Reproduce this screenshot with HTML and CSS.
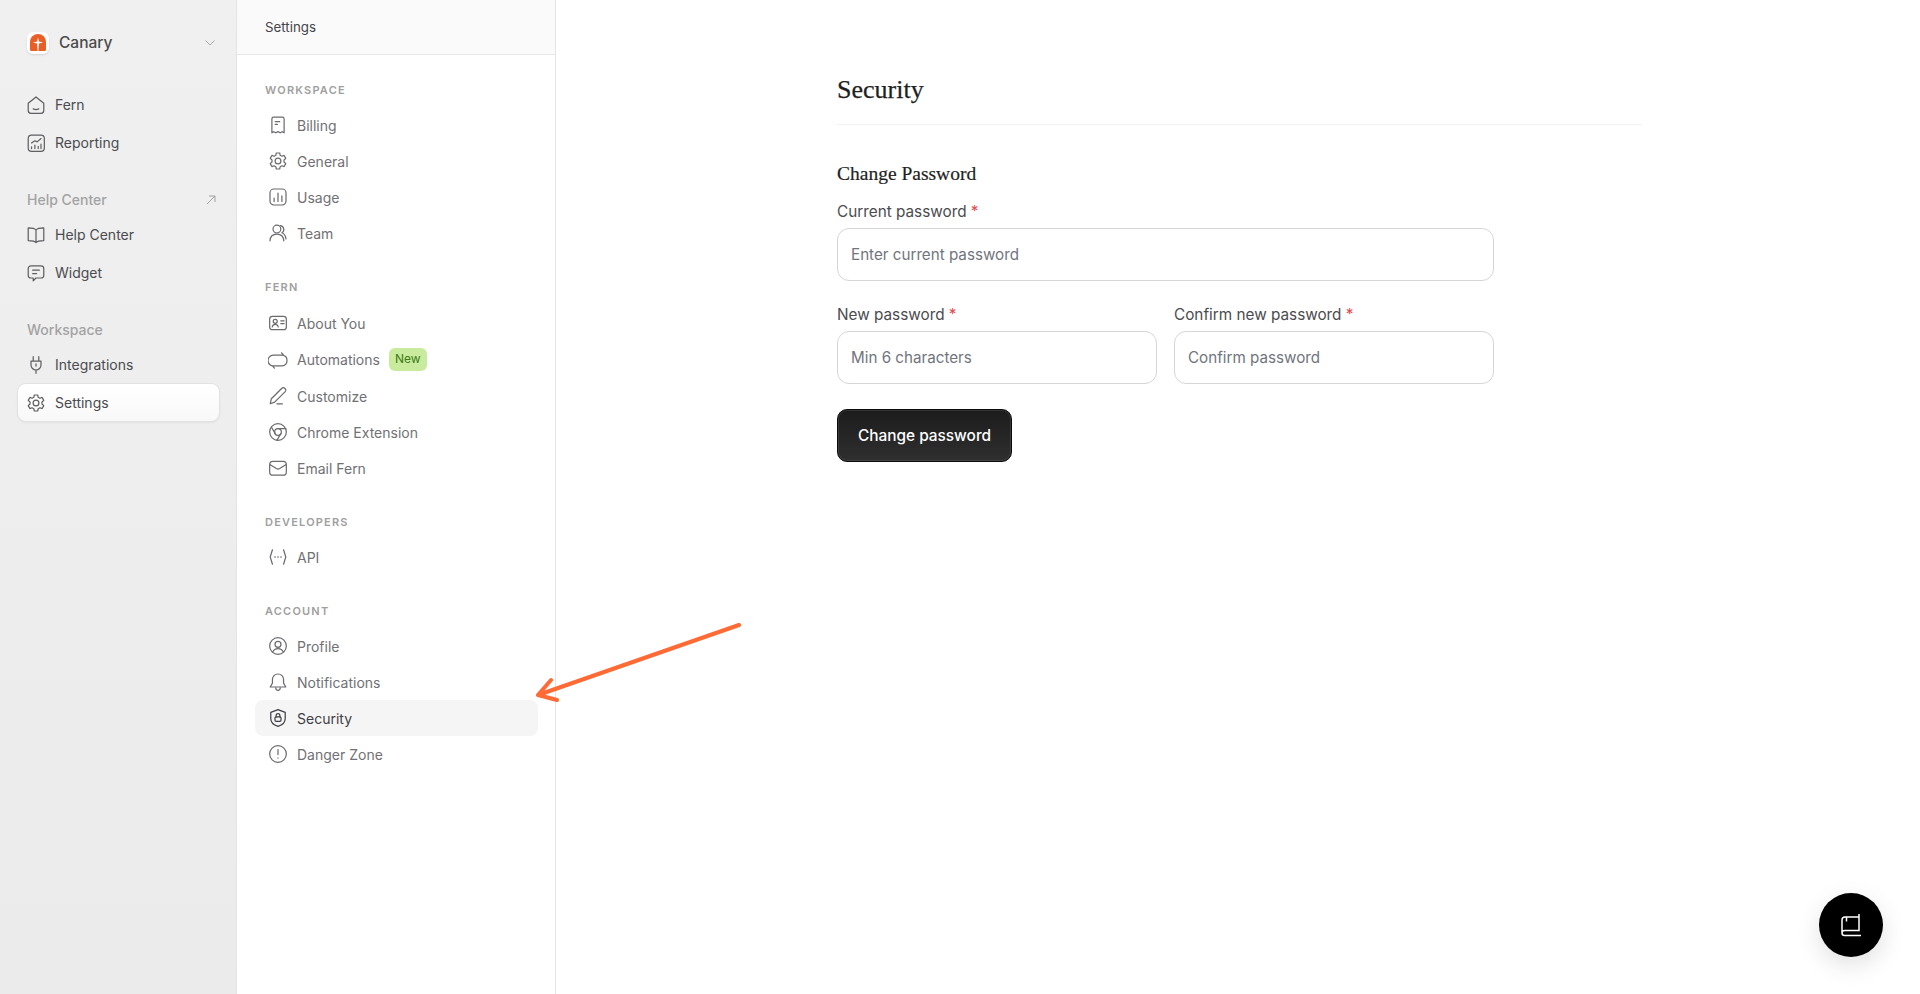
FILE: index.html
```html
<!DOCTYPE html>
<html lang="en">
<head>
<meta charset="utf-8">
<title>Security</title>
<link rel="stylesheet" href="styles.css">
</head>
<body>
<aside class="rail">
  <div class="brand">
    <span class="logo"><svg viewBox="0 0 18 18" width="18" height="18"><path d="M1 15.500V8a8 8 0 0 1 16 0v7.500a1.500 1.500 0 0 1-1.500 1.500h-13A1.500 1.500 0 0 1 1 15.500z" fill="#ea5f25"/><path d="M9 3.500 10 7.500l4 1-4 1-.6 7.500h-.8L8 9.500l-4-1 4-1z" fill="#fff"/></svg></span>
    <span class="brand-name">Canary</span>
    <svg class="chev" viewBox="0 0 12 12" width="12" height="12"><path d="M1.500 3.500 6 8l4.500-4.500" fill="none" stroke="#aaa" stroke-width="1"/></svg>
  </div>
  <nav class="rail-group">
    <a class="rail-item"><svg class="ic" viewBox="0 0 18 18"><path d="M2 7.500 9 1.800l7 5.700v6.500a2.500 2.500 0 0 1-2.500 2.500h-9A2.500 2.500 0 0 1 2 14z"/><path d="M6.500 12.500q2.500 1.200 5 0"/></svg>Fern</a>
    <a class="rail-item"><svg class="ic" viewBox="0 0 18 18"><rect x="2" y="2" width="14.500" height="14.500" rx="3"/><path d="M5 9l3-2 2 1 3.500-3M5 14v-1.500M8 14v-3M11 14v-2M13.500 14v-4"/></svg>Reporting</a>
  </nav>
  <div class="rail-head">Help Center<svg class="out" viewBox="0 0 10 10" width="10" height="10"><path d="M1 9 9 1M3 1h6v6" fill="none" stroke="#999" stroke-width=".9"/></svg></div>
  <nav class="rail-group">
    <a class="rail-item"><svg class="ic" viewBox="0 0 18 18"><path d="M9 4.500C8 3 6 2.500 2 2.500v11.500c4 0 6 .5 7 1.800 1-1.300 3-1.800 7-1.800V2.500c-4 0-6 .5-7 2zM9 4.500v11.300"/></svg>Help Center</a>
    <a class="rail-item"><svg class="ic" viewBox="0 0 18 18"><path d="M4.500 2.500h9a2.500 2.500 0 0 1 2.500 2.500v6a2.500 2.500 0 0 1-2.500 2.500H9l-2.500 2.500v-2.500h-2A2.500 2.500 0 0 1 2 11V5a2.500 2.500 0 0 1 2.500-2.500zM6 6.500h6M6 9.500h3.500"/></svg>Widget</a>
  </nav>
  <div class="rail-head gap">Workspace</div>
  <nav class="rail-group">
    <a class="rail-item"><svg class="ic" viewBox="0 0 18 18"><path d="M6.500 1.500v4M11.500 1.500v4M4.500 5.500h9v3.500a4.500 4.500 0 0 1-9 0zM9 13.500v3M9 8v2"/></svg>Integrations</a>
    <a class="rail-item active"><svg class="ic" viewBox="0 0 18 18"><use href="#gear"/></svg>Settings</a>
  </nav>
</aside>

<aside class="panel">
  <header class="panel-top">Settings</header>
  <div class="panel-body">
    <section class="sect">
      <h4 class="sect-title">Workspace</h4>
      <a class="link"><svg class="ic" viewBox="0 0 18 18"><path d="M3.500 3.500A1.500 1.500 0 0 1 5 2h8a1.500 1.500 0 0 1 1.500 1.500v12.500l-1.700-1-1.800 1-2-1-2 1-1.800-1-1.700 1zM6.500 6h4M6.500 8.500h2"/></svg>Billing</a>
      <a class="link"><svg class="ic" viewBox="0 0 18 18"><use href="#gear"/></svg>General</a>
      <a class="link"><svg class="ic" viewBox="0 0 18 18"><rect x="1.800" y="1.800" width="14.400" height="14.400" rx="3.500"/><path d="M5.500 13v-3M9 13V5.500M12.500 13V8"/></svg>Usage</a>
      <a class="link"><svg class="ic" viewBox="0 0 18 18"><circle cx="8" cy="5.500" r="3.500"/><path d="M1.800 16c.2-3.500 2.500-6 6.200-6s6 2.500 6.200 6M11 2.300a3.500 3.500 0 0 1 1.500 6.500c2 .8 3.400 3 3.700 5.500"/></svg>Team</a>
    </section>
    <section class="sect wide">
      <h4 class="sect-title">Fern</h4>
      <a class="link"><svg class="ic" viewBox="0 0 18 18"><rect x="1.500" y="3" width="15" height="12" rx="2.500"/><circle cx="6.500" cy="7.500" r="1.800"/><path d="M3.800 12.500c.3-1.500 1.300-2.300 2.700-2.300s2.400.8 2.700 2.300M11.500 7h3M11.500 9.500h3"/></svg>About You</a>
      <a class="link auto"><svg class="ic" viewBox="0 0 18 18"><path d="M5 14.300H5a4.800 4.800 0 0 1-.4-9.600h9M12.200 2.500l1.800 2.200M13 4.700a4.800 4.800 0 0 1 0 9.500H4.500M5.800 16.300 4 14.200"/></svg>Automations<span class="badge">New</span></a>
      <a class="link"><svg class="ic" viewBox="0 0 18 18"><path d="M2 16l1-4.500L12.500 2a1.800 1.800 0 0 1 2.500 0l.5.500a1.800 1.800 0 0 1 0 2.500L6 14.500zM8 16h5"/></svg>Customize</a>
      <a class="link"><svg class="ic" viewBox="0 0 18 18"><circle cx="9" cy="9" r="7.500"/><circle cx="9" cy="9" r="3"/><path d="M9 6h7M6.500 10.500 3 4.500M11.500 10.500 8 16.500"/></svg>Chrome Extension</a>
      <a class="link"><svg class="ic" viewBox="0 0 18 18"><rect x="1.500" y="3" width="15" height="12.500" rx="3"/><path d="M2 6l5.500 3.500a3 3 0 0 0 3 0L16 6"/></svg>Email Fern</a>
    </section>
    <section class="sect">
      <h4 class="sect-title">Developers</h4>
      <a class="link"><svg class="ic" viewBox="0 0 18 18"><path d="M4 2.500 2 9l2 6.500M14 2.500 16 9l-2 6.500"/><path class="dots" d="M6.300 9h.1M9 9h.1M11.700 9h.1"/></svg>API</a>
    </section>
    <section class="sect">
      <h4 class="sect-title">Account</h4>
      <a class="link"><svg class="ic" viewBox="0 0 18 18"><circle cx="9" cy="9" r="7.500"/><circle cx="9" cy="7.500" r="2.700"/><path d="M4.200 14.500c.8-2 2.500-3.200 4.800-3.200s4 1.200 4.800 3.200"/></svg>Profile</a>
      <a class="link"><svg class="ic" viewBox="0 0 18 18"><path d="M9 1.800c-3 0-5 2.200-5 5v3.200l-2 3.500h14l-2-3.500V6.800c0-2.800-2-5-5-5zM7 14.500a2 2 0 0 0 4 0"/></svg>Notifications</a>
      <a class="link current"><svg class="ic" viewBox="0 0 18 18"><path d="M9 1.500 15.500 4v5.500c0 3.500-2.700 6-6.500 7-3.800-1-6.500-3.500-6.500-7V4z"/><rect x="6.300" y="8" width="5.400" height="4" rx="1"/><path d="M7.300 8V6.800a1.700 1.700 0 0 1 3.400 0V8"/></svg>Security</a>
      <a class="link"><svg class="ic" viewBox="0 0 18 18"><circle cx="9" cy="9" r="7.500"/><path d="M9 5v4.500M9 12.500v.2"/></svg>Danger Zone</a>
    </section>
  </div>
</aside>

<main class="content">
  <h1 class="title">Security</h1>
  <h2 class="subtitle">Change Password</h2>
  <form class="form">
    <div class="field">
      <label class="label">Current password <span class="req">*</span></label>
      <input class="input" type="password" placeholder="Enter current password">
    </div>
    <div class="row">
      <div class="field">
        <label class="label">New password <span class="req">*</span></label>
        <input class="input" type="password" placeholder="Min 6 characters">
      </div>
      <div class="field">
        <label class="label">Confirm new password <span class="req">*</span></label>
        <input class="input" type="password" placeholder="Confirm password">
      </div>
    </div>
    <button class="btn" type="button">Change password</button>
  </form>
</main>

<svg class="arrow" viewBox="0 0 210 80" width="210" height="80"><path d="M204 2 3 72M16 57 3 72l19 5" fill="none" stroke="#ff6a35" stroke-width="4" stroke-linecap="round" stroke-linejoin="round"/></svg>

<button class="fab" type="button" aria-label="Help"><svg viewBox="0 0 24 24" width="24" height="24"><path d="M20 1V17.500H5.500A2.500 2.500 0 0 0 3 20a2.500 2.500 0 0 0 2.500 2.500H22M20 4H6a3 3 0 0 0-3 3v13M7.500 4v4.500" fill="none" stroke="#fff" stroke-width="1.500"/></svg></button>

<svg class="defs" width="0" height="0"><defs><symbol id="gear" viewBox="0 0 18 18"><path d="M7.500 1.800h3l.5 2.100 1.500.8 2-.7 1.500 2.600-1.600 1.500v1.800l1.600 1.500-1.500 2.600-2-.7-1.500.8-.5 2.100h-3l-.5-2.100-1.500-.8-2 .7-1.500-2.600 1.600-1.500V8.100L2 6.600l1.500-2.600 2 .7 1.500-.8z"/><circle cx="9" cy="9" r="2.600"/></symbol></defs></svg>
</body>
</html>
```
FILE: styles.css
```css
* { box-sizing: border-box; }
html, body { height: 100%; }
body {
  margin: 0;
  display: flex;
  height: 994px;
  overflow: hidden;
  background: #fff;
  font-family: Inter, "Liberation Sans", sans-serif;
  color: #3f3f46;
}
a { color: inherit; text-decoration: none; }

.ic {
  width: 20px;
  height: 20px;
  flex: none;
  fill: none;
  stroke: #5f5f63;
  stroke-width: 1.100;
  stroke-linecap: round;
  stroke-linejoin: round;
}
.ic .dots { stroke-width: 1.400; }
.defs { position: absolute; }

/* left rail */
.rail {
  width: 237px;
  flex: none;
  padding: 0 17px 0 18px;
  background: linear-gradient(#f0f0f0, #ebebeb);
  border-right: 1px solid #e4e4e4;
}
.brand {
  display: flex;
  align-items: center;
  height: 86px;
  padding: 0 3px 0 9px;
}
.logo {
  width: 22px;
  height: 22px;
  display: flex;
  align-items: center;
  justify-content: center;
  background: #fff;
  border-radius: 6px;
  box-shadow: 0 1px 2px rgba(0,0,0,.12);
}
.brand-name {
  margin-left: 10px;
  margin-bottom: 1px;
  font-size: 15.500px;
  font-weight: 500;
  color: #4a4a4a;
}
.chev { margin-left: auto; }
.rail-group { display: flex; flex-direction: column; gap: 1px; }
.rail-item {
  display: flex;
  align-items: center;
  gap: 9px;
  height: 37px;
  padding: 0 9px 0 8px;
  font-size: 14px;
  color: #4b4b50;
}
.rail-item.active {
  background: linear-gradient(#fff, #f8f8f8);
  border-radius: 8px;
  box-shadow: 0 0 0 1px #e2e2e2, 0 1px 3px rgba(0,0,0,.1);
}
.rail-head {
  display: flex;
  align-items: center;
  justify-content: space-between;
  margin-top: 22px;
  height: 33px;
  padding: 0 3px 0 9px;
  font-size: 14px;
  font-weight: 500;
  color: #a3a3a3;
}
.rail-head.gap { margin-top: 22px; }

/* settings list */
.panel {
  width: 319px;
  flex: none;
  border-right: 1px solid #e5e5e5;
}
.panel-top {
  height: 55px;
  display: flex;
  align-items: center;
  padding-left: 28px;
  background: #fafafa;
  border-bottom: 1px solid #e8e8e8;
  font-size: 13.300px;
  color: #44444c;
}
.panel-body { padding: 26px 17px 0 18px; }
.sect { margin-bottom: 27px; }
.sect-title {
  margin: 0;
  padding-left: 10px;
  height: 18px;
  line-height: 18px;
  font-size: 11px;
  font-weight: 600;
  letter-spacing: 1.200px;
  text-transform: uppercase;
  color: #a0a0a0;
}
.sect-title + .link { margin-top: 8px; }
.sect.wide .sect-title + .link { margin-top: 9px; }
.link {
  display: flex;
  align-items: center;
  gap: 9px;
  height: 36px;
  padding: 0 13px;
  font-size: 14px;
  color: #717175;
  border-radius: 8px;
}
.link.auto { height: 37px; }
.link.current { background: #f5f5f5; color: #3f3f46; }
.link.current .ic { stroke: #3f3f46; }
.link .ic { stroke: #6b6b6f; }
.badge {
  margin-left: 0;
  padding: 0 6px;
  height: 23px;
  line-height: 21px;
  background: #c8eb9e;
  border-radius: 6px;
  font-size: 12px;
  font-weight: 400;
  color: #3f7a12;
}

/* main */
.content { flex: 1; padding: 73px 0 0 281px; }
.title {
  width: 805px;
  margin: 0;
  padding-bottom: 18px;
  border-bottom: 1px solid #f3f3f3;
  font-family: "Liberation Serif", serif;
  font-size: 26px;
  line-height: 33px;
  font-weight: 400;
  color: #1f1f1f;
  -webkit-text-stroke: .25px #1f1f1f;
}
.subtitle {
  margin: 37px 0 0;
  font-family: "Liberation Serif", serif;
  font-size: 19.500px;
  line-height: 24px;
  font-weight: 400;
  color: #1f1f1f;
  -webkit-text-stroke: .2px #1f1f1f;
}
.form { width: 657px; }
.field { display: flex; flex-direction: column; flex: 1; min-width: 0; }
.form > .field { margin-top: 14px; }
.row { display: flex; gap: 17px; margin-top: 22px; }
.label {
  height: 23px;
  padding-top: 1px;
  line-height: 22px;
  margin-bottom: 5px;
  font-size: 15.300px;
  color: #4b4b4f;
}
.req { color: #e5484d; }
.input {
  width: 100%;
  height: 53px;
  padding: 0 13px;
  border: 1px solid #d6d6d6;
  border-radius: 12px;
  outline: none;
  background: #fff;
  font: 400 15.200px Inter, sans-serif;
}
.input::placeholder { color: #71757e; opacity: 1; }
.btn {
  display: block;
  width: 175px;
  height: 53px;
  margin-top: 25px;
  border: 1px solid #0a0a0a;
  border-radius: 10px;
  background: linear-gradient(#1c1c1c, #2f2f2f);
  box-shadow: inset 0 0 0 1px rgba(255,255,255,.1);
  color: #fff;
  font: 500 15.400px Inter, sans-serif;
}

/* overlays */
.arrow { position: absolute; left: 535px; top: 623px; }
.fab {
  position: absolute;
  right: 37px;
  bottom: 37px;
  width: 64px;
  height: 64px;
  padding: 0;
  display: flex;
  align-items: center;
  justify-content: center;
  border: 0;
  border-radius: 50%;
  background: #000;
  box-shadow: 0 8px 24px rgba(0,0,0,.12);
}
```
